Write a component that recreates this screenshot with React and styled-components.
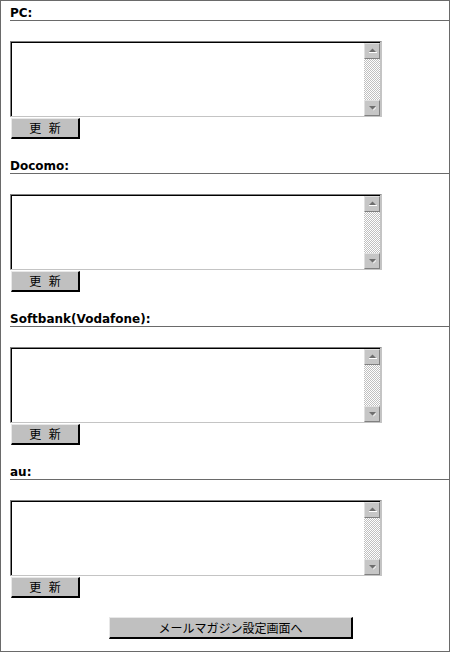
import React from "react";
import styled, { createGlobalStyle } from "styled-components";

const Global = createGlobalStyle`
  html, body { margin: 0; padding: 0; background: #fff; }
  body { font-family: "DejaVu Sans", "Noto Sans CJK JP", sans-serif; }
`;

const Page = styled.div`
  box-sizing: border-box;
  width: 450px;
  height: 652px;
  border: 1px solid #6a6a6a;
  padding: 5px 0 0 9px;
  display: flex;
  flex-direction: column;
`;

const Section = styled.section`
  display: flex;
  flex-direction: column;
  align-items: flex-start;
  margin-bottom: 20px;
`;

const Heading = styled.h3`
  align-self: stretch;
  margin: 0 0 20px 0;
  height: 14px;
  line-height: 14px;
  font-family: "DejaVu Sans", sans-serif;
  font-weight: bold;
  font-size: 12px;
  color: #000;
  border-bottom: 1px solid #6a6a6a;
`;

const Field = styled.div`
  box-sizing: border-box;
  width: 372px;
  height: 76px;
  display: flex;
  border-top: 1px solid #808080;
  border-left: 1px solid #808080;
  border-right: 2px solid #c4c4c4;
  border-bottom: 1px solid #c4c4c4;
  padding: 1px 0 0 1px;
  box-shadow: inset 1px 1px 0 #000;
  background: #fff;
`;

const Area = styled.textarea`
  flex: 1;
  border: none;
  outline: none;
  resize: none;
  margin: 0;
  padding: 2px;
  font-family: "Noto Sans CJK JP", sans-serif;
  font-size: 12px;
  background: #fff;
  overflow: hidden;
`;

const ScrollBar = styled.div`
  width: 16px;
  display: flex;
  flex-direction: column;
`;

const ScrollBtn = styled.div`
  box-sizing: border-box;
  height: 16px;
  background: #c6c6c6;
  border-top: 1px solid #e0e0e0;
  border-left: 1px solid #e0e0e0;
  border-right: 1px solid #808080;
  border-bottom: 1px solid #808080;
  display: flex;
  align-items: center;
  justify-content: center;
`;

const Track = styled.div`
  flex: 1;
  background-color: #fff;
  background-image: repeating-conic-gradient(#c0c0c0 0 25%, #fff 0 50%);
  background-size: 2px 2px;
`;

const Button = styled.button`
  box-sizing: border-box;
  margin: ${(p) => (p.$gap ? "1px 0 0 1px" : "0")};
  padding: 0;
  width: ${(p) => p.$w}px;
  height: ${(p) => p.$h}px;
  background: #c0c0c0;
  border-top: 1px solid #e8e8e8;
  border-left: 1px solid #e8e8e8;
  border-right: 2px solid #000;
  border-bottom: 2px solid #000;
  font-family: "Noto Sans CJK JP", sans-serif;
  font-size: 12px;
  line-height: 1;
  color: #000;
  word-spacing: ${(p) => p.$ws || 0}px;
  cursor: pointer;
`;

const Footer = styled.div`
  display: flex;
  justify-content: center;
  padding-left: 3px;
  margin-top: -1px;
`;

const Arrow = ({ down }) => (
  <svg width="9" height="6" viewBox="0 0 9 6">
    {down ? (
      <>
        <polygon points="1,1 8,1 4.5,4.5" fill="#6e6e6e" />
        <polygon points="5,5 8,2 8,3 5.5,5.5" fill="#fff" />
      </>
    ) : (
      <>
        <polygon points="1,4 8,4 4.5,0.5" fill="#6e6e6e" />
        <rect x="1" y="4" width="8" height="1" fill="#fff" />
      </>
    )}
  </svg>
);

const Block = ({ title }) => (
  <Section>
    <Heading>{title}</Heading>
    <Field>
      <Area />
      <ScrollBar>
        <ScrollBtn>
          <Arrow />
        </ScrollBtn>
        <Track />
        <ScrollBtn>
          <Arrow down />
        </ScrollBtn>
      </ScrollBar>
    </Field>
    <Button $gap $w={69} $h={21} $ws={5}>更 新</Button>
  </Section>
);

export default function App() {
  return (
    <>
      <Global />
      <Page>
        <Block title="PC:" />
        <Block title="Docomo:" />
        <Block title="Softbank(Vodafone):" />
        <Block title="au:" />
        <Footer>
          <Button $w={244} $h={22}>メールマガジン設定画面へ</Button>
        </Footer>
      </Page>
    </>
  );
}
